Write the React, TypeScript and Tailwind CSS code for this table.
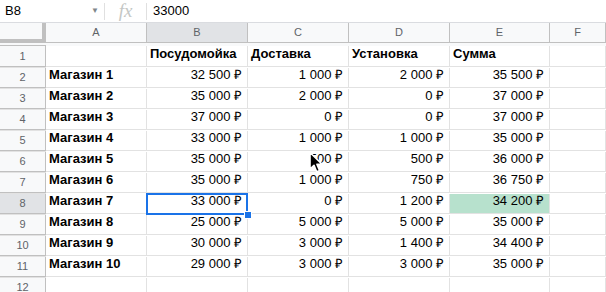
import React from 'react';

const COLS = ['A', 'B', 'C', 'D', 'E', 'F'];

const ROWS: string[][] = [
  ['', 'Посудомойка', 'Доставка', 'Установка', 'Сумма', ''],
  ['Магазин 1', '32 500 ₽', '1 000 ₽', '2 000 ₽', '35 500 ₽', ''],
  ['Магазин 2', '35 000 ₽', '2 000 ₽', '0 ₽', '37 000 ₽', ''],
  ['Магазин 3', '37 000 ₽', '0 ₽', '0 ₽', '37 000 ₽', ''],
  ['Магазин 4', '33 000 ₽', '1 000 ₽', '1 000 ₽', '35 000 ₽', ''],
  ['Магазин 5', '35 000 ₽', '500 ₽', '500 ₽', '36 000 ₽', ''],
  ['Магазин 6', '35 000 ₽', '1 000 ₽', '750 ₽', '36 750 ₽', ''],
  ['Магазин 7', '33 000 ₽', '0 ₽', '1 200 ₽', '34 200 ₽', ''],
  ['Магазин 8', '25 000 ₽', '5 000 ₽', '5 000 ₽', '35 000 ₽', ''],
  ['Магазин 9', '30 000 ₽', '3 000 ₽', '1 400 ₽', '34 400 ₽', ''],
  ['Магазин 10', '29 000 ₽', '3 000 ₽', '3 000 ₽', '35 000 ₽', ''],
  ['', '', '', '', '', ''],
];

const gridCols = 'grid grid-cols-[46px_101px_101px_101px_101px_100px_1fr]';

// mouse pointer sitting over C6
const Cursor = () => (
  <svg
    className="absolute left-[308px] top-[151px]"
    width="16"
    height="24"
    viewBox="0 0 16 24"
  >
    <path
      d="M2 1.5 L2 18 L6 14.3 L8.7 20.8 L11.6 19.6 L8.9 13.3 L14 13.3 Z"
      fill="#000"
      stroke="#fff"
      strokeWidth="1.6"
      strokeLinejoin="round"
    />
  </svg>
);

export default function App() {
  return (
    <div
      className="relative w-[606px] h-[292px] overflow-hidden bg-white text-black"
      style={{ fontFamily: '"Liberation Sans", Arial, sans-serif' }}
    >
      {/* formula bar */}
      <div className="flex items-center h-[23px] border-b border-[#dadce0] text-[13px]">
        <div className="w-[86px] pl-[5px]">B8</div>
        <div className="w-[18px] text-[8px] text-[#80868b] text-center leading-none">▼</div>
        <div className="w-px h-[17px] bg-[#e0e0e0]" />
        <div
          className="w-[41px] text-center text-[19px] italic text-[#c4c7c5]"
          style={{ fontFamily: '"Liberation Serif", serif' }}
        >
          fx
        </div>
        <div className="w-px h-[17px] bg-[#e0e0e0]" />
        <div className="pl-[6px]">33000</div>
      </div>

      {/* column headers */}
      <div className={`${gridCols} h-[23px] bg-[#f8f9fa] text-[11px] text-[#5f6368]`}>
        <div className="border-r-4 border-b-4 border-[#c0c0c0] bg-[#f8f9fa]" />
        {COLS.map((c) => (
          <div
            key={c}
            className={`flex items-center justify-center border-r border-b border-[#c0c0c0] ${
              c === 'B' ? 'bg-[#e1e3e6]' : ''
            }`}
          >
            {c}
          </div>
        ))}
        <div className="border-b border-[#c0c0c0]" />
      </div>

      {/* rows */}
      {ROWS.map((row, r) => {
        const n = r + 1;
        const first = r === 0;
        return (
          <div key={n} className={`${gridCols} ${first ? 'h-[22px]' : 'h-[21px]'} text-[13px]`}>
            <div
              className={`flex items-center justify-center border-r border-b border-[#c0c0c0] text-[11px] text-[#5f6368] ${
                n === 8 ? 'bg-[#e1e3e6]' : 'bg-[#f8f9fa]'
              }`}
            >
              {n}
            </div>
            {row.map((v, c) => {
              const left = c === 0 || first;
              const bold = c === 0 || first;
              const green = n === 8 && c === 4;
              return (
                <div
                  key={c}
                  className={`flex items-end pb-[3px] border-r border-b border-[#e2e2e2] whitespace-nowrap overflow-hidden ${
                    left ? 'justify-start pl-[3px]' : 'justify-end pr-[5px]'
                  } ${bold ? 'font-bold' : ''} ${green ? 'bg-[#b7e1cd]' : ''}`}
                >
                  {v}
                </div>
              );
            })}
            <div className="border-b border-[#e2e2e2]" />
          </div>
        );
      })}

      {/* selection on B8 */}
      <div className="absolute left-[146px] top-[193px] w-[102px] h-[22px] border-2 border-[#1a73e8]" />
      <div className="absolute left-[244px] top-[211px] w-[6px] h-[6px] bg-[#1a73e8] border border-white box-content" />

      <Cursor />
    </div>
  );
}
